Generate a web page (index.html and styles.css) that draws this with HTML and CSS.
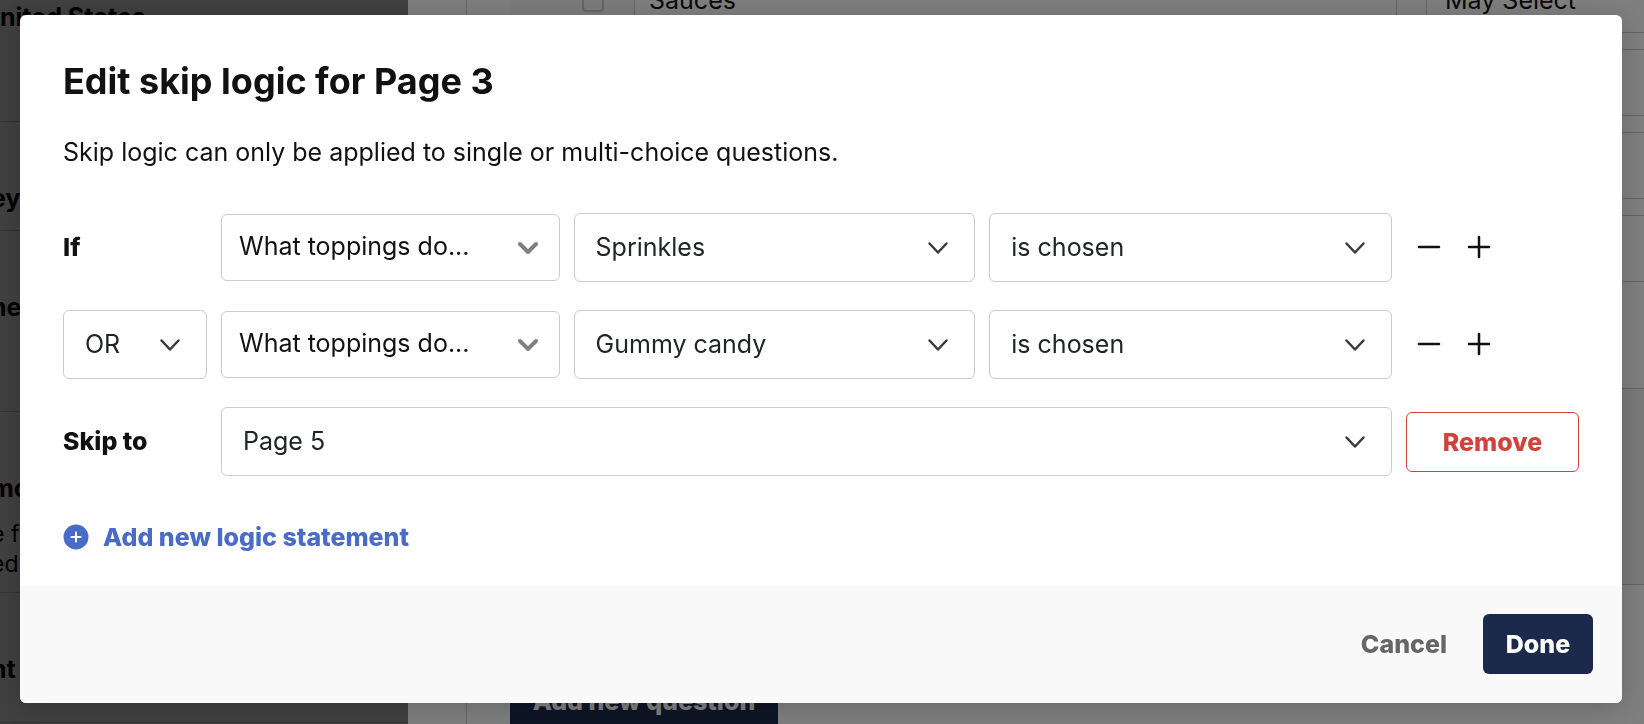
FILE: index.html
```
<!DOCTYPE html>
<html lang="en">
<head>
    <meta charset="UTF-8">
    <meta name="viewport" content="width=device-width, initial-scale=1.0">
    <title>Edit skip logic</title>
    <link rel="stylesheet" href="styles.css">
</head>
<body>
    <!-- survey builder behind the dialog -->
    <div class="page">
        <aside class="sidebar">
            <section class="side-country"><h4>nited States</h4></section>
            <section class="side-survey"><h4>ey</h4></section>
            <section class="side-name"><h4>ne</h4></section>
            <section class="side-more">
                <h4>mo</h4>
                <p>e f<br>ed</p>
            </section>
            <section class="side-last"><h4>nt</h4></section>
        </aside>
        <main class="builder">
            <div class="question">
                <div class="option-row">
                    <div class="option-tick"><input type="checkbox" aria-label="Sauces"></div>
                    <div class="option-name">Sauces</div>
                    <div class="option-rule">May Select</div>
                </div>
                <div class="side-boxes">
                    <div class="box"></div>
                    <div class="box"></div>
                    <div class="box"></div>
                </div>
                <div class="block"></div>
                <div class="block-end"></div>
                <button class="add-question" type="button">Add new question</button>
            </div>
        </main>
    </div>

    <div class="overlay">
        <div class="modal" role="dialog" aria-labelledby="modalTitle">
            <form class="modal-body">
                <h1 id="modalTitle">Edit skip logic for Page 3</h1>
                <p class="hint">Skip logic can only be applied to single or multi-choice questions.</p>

                <div class="logic">
                    <label class="row-label" for="question1">If</label>
                    <div class="select question-select">
                        <select id="question1"><option>What toppings do...</option></select>
                        <svg viewBox="0 0 24 24"><path d="M4 8l8 8 8-8"/></svg>
                    </div>
                    <div class="select">
                        <select aria-label="Answer"><option>Sprinkles</option></select>
                        <svg viewBox="0 0 24 24"><path d="M3.5 7.500l8.500 9 8.500-9"/></svg>
                    </div>
                    <div class="select">
                        <select aria-label="Condition"><option>is chosen</option></select>
                        <svg viewBox="0 0 24 24"><path d="M3.5 7.500l8.500 9 8.500-9"/></svg>
                    </div>
                    <div class="row-actions">
                        <button type="button" aria-label="Remove condition"><svg viewBox="0 0 24 24"><path d="M2 12h20"/></svg></button>
                        <button type="button" aria-label="Add condition"><svg viewBox="0 0 24 24"><path d="M2 12h20M12 2v20"/></svg></button>
                    </div>

                    <div class="select">
                        <select aria-label="Operator"><option>OR</option></select>
                        <svg viewBox="0 0 24 24"><path d="M3.5 7.500l8.500 9 8.500-9"/></svg>
                    </div>
                    <div class="select question-select">
                        <select aria-label="Question"><option>What toppings do...</option></select>
                        <svg viewBox="0 0 24 24"><path d="M4 8l8 8 8-8"/></svg>
                    </div>
                    <div class="select">
                        <select aria-label="Answer"><option>Gummy candy</option></select>
                        <svg viewBox="0 0 24 24"><path d="M3.5 7.500l8.500 9 8.500-9"/></svg>
                    </div>
                    <div class="select">
                        <select aria-label="Condition"><option>is chosen</option></select>
                        <svg viewBox="0 0 24 24"><path d="M3.5 7.500l8.500 9 8.500-9"/></svg>
                    </div>
                    <div class="row-actions">
                        <button type="button" aria-label="Remove condition"><svg viewBox="0 0 24 24"><path d="M2 12h20"/></svg></button>
                        <button type="button" aria-label="Add condition"><svg viewBox="0 0 24 24"><path d="M2 12h20M12 2v20"/></svg></button>
                    </div>

                    <label class="row-label" for="skipTo">Skip to</label>
                    <div class="select skip-select">
                        <select id="skipTo"><option>Page 5</option></select>
                        <svg viewBox="0 0 24 24"><path d="M3.5 7.500l8.500 9 8.500-9"/></svg>
                    </div>
                    <button class="remove" type="button">Remove</button>
                </div>

                <button class="add-logic" type="button">
                    <svg viewBox="0 0 26 26"><circle cx="13" cy="13" r="12.500"/><path d="M13 8.500v9M8.500 13h9"/></svg>
                    Add new logic statement
                </button>
            </form>
            <div class="modal-footer">
                <button class="cancel" type="button">Cancel</button>
                <button class="done" type="button">Done</button>
            </div>
        </div>
    </div>
</body>
</html>
```
FILE: styles.css
```
* {
    box-sizing: border-box;
}
body {
    font-family: Inter, 'Liberation Sans', sans-serif;
    font-size: 25px;
    line-height: 32px;
    color: #111;
    margin: 0;
    overflow: hidden;
}
h1, h4, p {
    margin: 0;
}
button, select {
    font: inherit;
    color: inherit;
}
button {
    padding: 0;
    border: none;
    background: none;
    font-weight: 800;
    cursor: pointer;
}

/* page behind the dialog */
.page {
    display: flex;
    height: 100vh;
    overflow: hidden;
    background: #fff;
}
.sidebar {
    flex: 0 0 408px;
    background: #808080;
    color: #000;
    font-size: 23px;
    line-height: 30px;
}
.sidebar section {
    border-bottom: 1px solid #6a6a6a;
    text-indent: -9px;
}
.sidebar h4 {
    font-size: 25px;
    font-weight: 700;
}
.sidebar .side-country {
    height: 122px;
    padding-top: 2px;
    text-indent: 0;
}
.side-survey {
    height: 109px;
    padding-top: 61px;
}
.side-name {
    height: 181px;
    padding-top: 61px;
}
.side-more {
    height: 181px;
    padding-top: 61px;
}
.side-more p {
    padding-top: 16px;
    margin-left: -9px;
    text-indent: 0;
}
.side-last {
    height: 130px;
    padding-top: 61px;
}
.builder {
    flex: 1;
    padding-left: 58px;
}
.question {
    border-left: 1px solid #ccc;
    padding-left: 43px;
}
.option-row {
    display: flex;
    height: 33px;
    border-bottom: 1px solid #ccc;
}
.option-tick {
    width: 124px;
    padding-left: 72px;
    background: #f8f8f8;
}
.option-tick input {
    appearance: none;
    display: block;
    width: 22px;
    height: 22px;
    margin: -10px 0 0;
    border: 2px solid #ccc;
    border-radius: 4px;
}
.option-name {
    flex: 1;
    border: solid #ccc;
    border-width: 0 1px;
    padding-left: 14px;
    margin-right: 29px;
    line-height: 0;
}
.option-rule {
    width: 218px;
    border-left: 1px solid #ccc;
    padding-left: 18px;
    line-height: 0;
}
.side-boxes {
    display: grid;
    gap: 16px;
    padding-top: 16px;
}
.box {
    height: 67px;
    border: solid #ccc;
    border-width: 1px 0;
}
.block {
    height: 107px;
    border-bottom: 1px solid #ccc;
}
.block-end {
    height: 196px;
    background: #f3f3f3;
    border-bottom: 1px solid #ccc;
}
.add-question {
    display: block;
    width: 268px;
    height: 60px;
    margin-top: 86px;
    background: #1b2a4a;
    color: #fff;
}

/* dialog */
.overlay {
    position: fixed;
    inset: 0;
    padding: 15px 22px 21px 20px;
    background: rgba(0, 0, 0, 0.5);
}
.modal {
    background: #fff;
    border-radius: 6px;
    box-shadow: 0 4px 28px rgba(0, 0, 0, 0.2);
    overflow: hidden;
}
.modal-body {
    padding: 46px 43px 33px;
}
h1 {
    font-size: 36px;
    line-height: 40px;
    font-weight: 750;
}
.hint {
    padding: 35px 0 45px;
}
.logic {
    display: grid;
    grid-template-columns: 144px 338fr 401fr 402fr 173px;
    column-gap: 14px;
    row-gap: 28px;
    align-items: center;
}
.row-label {
    padding-bottom: 2px;
    font-weight: 800;
}
.select {
    position: relative;
    color: #212529;
}
.select select {
    appearance: none;
    display: block;
    width: 100%;
    height: 69px;
    padding: 0 21px 1px;
    border: 1px solid #ccc;
    border-radius: 6px;
    background: #fff;
}
.select svg {
    position: absolute;
    top: 50%;
    right: 25px;
    width: 24px;
    height: 24px;
    margin-top: -12px;
    fill: none;
    stroke: #343a40;
    stroke-width: 2.5;
    stroke-linecap: round;
    stroke-linejoin: round;
    pointer-events: none;
}
.question-select {
    color: #111;
}
.question-select select {
    height: 67px;
    padding: 0 17px 3px;
}
.question-select svg {
    right: 20px;
    stroke: #808080;
    stroke-width: 4;
}
.skip-select {
    grid-column: 2 / 5;
}
.row-actions {
    display: flex;
    gap: 26px;
    padding: 0 0 2px 11px;
}
.row-actions svg {
    display: block;
    width: 24px;
    height: 24px;
    stroke: #111;
    stroke-width: 2.5;
    stroke-linecap: round;
}
.remove {
    height: 60px;
    border: 1px solid #d0433a;
    border-radius: 6px;
    color: #d0433a;
}
.add-logic {
    display: flex;
    align-items: center;
    gap: 14px;
    margin-top: 45px;
    color: #4a6cc8;
}
.add-logic svg {
    width: 26px;
    height: 26px;
    fill: #4a6cc8;
}
.add-logic path {
    stroke: #fff;
    stroke-width: 2;
    stroke-linecap: round;
}
.modal-footer {
    display: flex;
    justify-content: flex-end;
    gap: 36px;
    padding: 28px 29px 29px;
    background: #f9f9f9;
}
.cancel {
    color: #666;
}
.done {
    width: 110px;
    height: 60px;
    border-radius: 6px;
    background: #1b2a4a;
    color: #fff;
}
```
